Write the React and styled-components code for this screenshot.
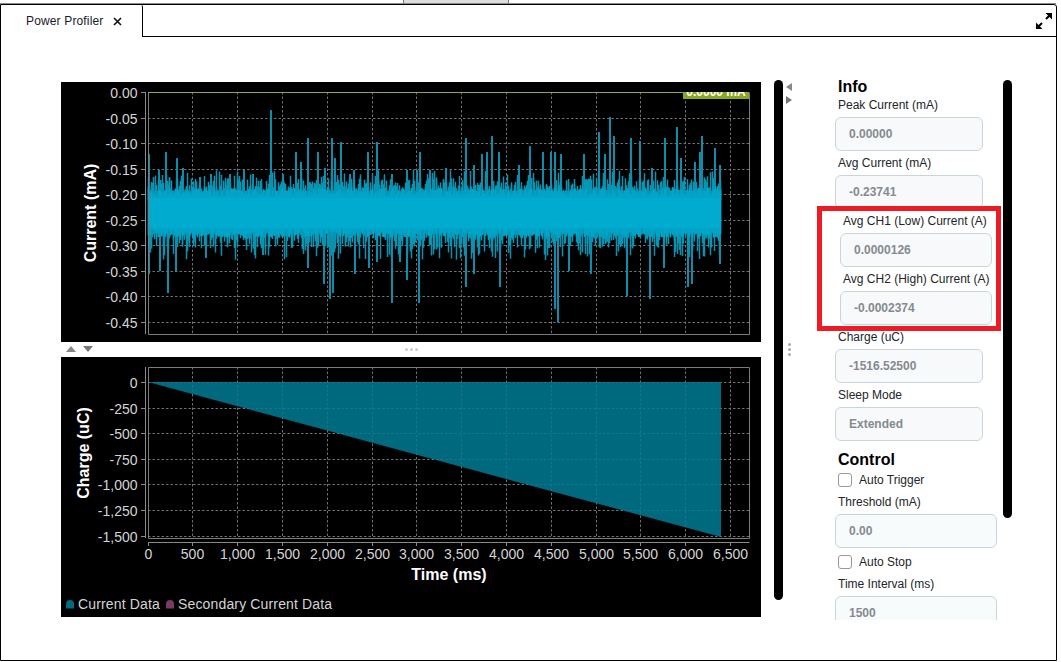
import React from 'react';
import styled, { createGlobalStyle } from 'styled-components';

const GlobalStyle = createGlobalStyle`
  html, body {
    margin: 0;
    background: #fff;
    overflow: hidden;
  }
  body {
    font-family: "Liberation Sans", Arial, sans-serif;
    font-size: 12px;
    color: #212529;
  }
`;

const TopStrip = styled.div`
  width: 1056px;
  height: 4px;
  border-bottom: 1px solid #888;
  padding-left: 403px;
  box-sizing: border-box;
  display: flex;
`;

const DragHandle = styled.div`
  width: 106px;
  box-sizing: border-box;
  background: #ddd;
  border-left: 1px solid #777;
  border-right: 1px solid #777;
`;

const Shell = styled.div`
  width: 1055px;
  height: 655px;
  border: 1px solid #000;
  border-top-right-radius: 3px;
  overflow: hidden;
`;

const TabBar = styled.div`
  display: flex;
  height: 32px;
`;

const Tab = styled.div`
  width: 142px;
  border-right: 1px solid #000;
  border-top-right-radius: 2px;
  display: flex;
  align-items: center;
  padding: 0 0 0 25px;
  box-sizing: border-box;
  gap: 10px;
  color: #1a1a2a;
  letter-spacing: 0.15px;
`;

const TabRest = styled.div`
  flex: 1;
  border-bottom: 1px solid #000;
  display: flex;
  justify-content: flex-end;
  padding: 8px 4px 0 0;
`;

const Workspace = styled.div`
  display: flex;
  align-items: flex-start;
  padding: 41px 0 0 60px;
`;

const ChartColumn = styled.div`
  width: 700px;
  margin-top: 4px;
  flex: none;
`;

const ChartPanel = styled.div`
  height: 260px;
  background: #000;
  svg {
    display: block;
  }
`;

const Splitter = styled.div`
  height: 15px;
  position: relative;
  display: flex;
  align-items: center;
  justify-content: center;
`;

const SplitterArrows = styled.div`
  position: absolute;
  left: 5px;
  top: 4px;
  display: flex;
  gap: 7px;
`;

const ArrowUp = styled.span`
  width: 0;
  height: 0;
  border-left: 5px solid transparent;
  border-right: 5px solid transparent;
  border-bottom: 6px solid #888;
`;

const ArrowDown = styled(ArrowUp)`
  border-bottom: none;
  border-top: 6px solid #777;
`;

const GripDots = styled.div`
  display: flex;
  flex-direction: ${p => (p.$vertical ? 'column' : 'row')};
  gap: 2px;
  margin-top: ${p => (p.$vertical ? '239px' : '0')};
  span {
    width: 3px;
    height: 3px;
    border-radius: 50%;
    background: ${p => (p.$vertical ? '#aaa' : '#ccc')};
  }
`;

const Rail = styled.div`
  width: 9px;
  height: ${p => p.$height}px;
  background: #000;
  border-radius: 5px;
  margin: 2px 0 0 ${p => p.$gap || 0}px;
  flex: none;
`;

const ArrowColumn = styled.div`
  width: 8px;
  margin: 5px 0 0 2px;
  display: flex;
  flex-direction: column;
  align-items: center;
  flex: none;
`;

const ArrowLeft = styled.span`
  width: 0;
  height: 0;
  border-top: 4px solid transparent;
  border-bottom: 4px solid transparent;
  border-right: 6px solid #888;
`;

const ArrowRight = styled.span`
  width: 0;
  height: 0;
  margin-top: 5px;
  border-top: 4px solid transparent;
  border-bottom: 4px solid transparent;
  border-left: 6px solid #777;
`;

const SidePanel = styled.div`
  width: 188px;
  height: 542px;
  margin-left: 22px;
  padding-left: 20px;
  box-sizing: border-box;
  overflow: hidden;
  flex: none;
  display: flex;
  flex-direction: column;
  > * {
    flex: none;
  }
`;

const SectionTitle = styled.h3`
  margin: ${p => (p.$first ? '0' : '6px')} 0 1px 3px;
  font-size: 16px;
  line-height: 18px;
  font-weight: 700;
  color: #000;
`;

const Field = styled.div`
  margin-bottom: 4px;
`;

const FieldLabel = styled.div`
  margin: 0 0 4px 3px;
  line-height: 16px;
  white-space: nowrap;
`;

const FieldValue = styled.div`
  width: ${p => p.$width || 148}px;
  height: 34px;
  box-sizing: border-box;
  padding-left: 13px;
  border: 1px solid #c8d6dc;
  border-radius: 6px;
  background: ${p => (p.$editable ? '#f8fbfc' : '#f8f9fa')};
  color: #868a90;
  font-weight: 700;
  line-height: 32px;
`;

const Highlighted = styled.div`
  position: relative;
  margin-left: 5px;
`;

const RedBox = styled.div`
  position: absolute;
  left: -23px;
  top: -7px;
  width: 184px;
  height: 125px;
  box-sizing: border-box;
  border: 5px solid #ed1c24;
`;

const CheckRow = styled.label`
  display: flex;
  align-items: center;
  gap: 7px;
  height: 14px;
  margin: 3px 0 7px 3px;
`;

const CheckBox = styled.input.attrs({ type: 'checkbox' })`
  appearance: none;
  width: 14px;
  height: 14px;
  margin: 0;
  border: 1px solid #999;
  border-radius: 3px;
  background: #fff;
`;

const TickLabel = styled.text`
  font-family: "Liberation Sans", Arial, sans-serif;
  font-size: 14px;
  fill: #d4d4d4;
`;

const LegendLabel = styled(TickLabel)`
  letter-spacing: 0.15px;
`;

const AxisTitle = styled.text`
  font-family: "Liberation Sans", Arial, sans-serif;
  font-size: 16px;
  font-weight: 700;
  fill: #fff;
`;

const BadgeText = styled.text`
  font-family: "Liberation Sans", Arial, sans-serif;
  font-size: 12px;
  font-weight: 700;
  fill: #fff;
`;

const X_GRID = [192.5, 237.5, 282.5, 327.5, 372.5, 416.5, 461.5, 506.5, 551.5, 596.5, 640.5, 685.5, 730.5];
const CURRENT_TICKS = ['0.00', '-0.05', '-0.10', '-0.15', '-0.20', '-0.25', '-0.30', '-0.35', '-0.40', '-0.45'];
const CHARGE_TICKS = ['0', '-250', '-500', '-750', '-1,000', '-1,250', '-1,500'];
const TIME_TICKS = ['0', '500', '1,000', '1,500', '2,000', '2,500', '3,000', '3,500', '4,000', '4,500', '5,000', '5,500', '6,000', '6,500'];

// spike tops and bottoms read off the trace
const UP_SPIKES = [
  [149, 154], [159, 170], [166, 152], [177, 158], [183, 168], [200, 177], [211, 174], [230, 174], [244, 170], [253, 174],
  [271, 110], [283, 174], [296, 152], [301, 162], [308, 138], [318, 152], [325, 168], [332, 138], [335, 158], [341, 142],
  [350, 174], [354, 170], [368, 152], [377, 142], [392, 174], [407, 170], [417, 170], [420, 152], [430, 170], [446, 168],
  [466, 138], [474, 165], [482, 154], [487, 152], [492, 136], [499, 152], [519, 165], [530, 146], [543, 152], [551, 152],
  [555, 152], [561, 154], [584, 154], [599, 132], [605, 154], [610, 117], [614, 136], [631, 138], [640, 141], [652, 168],
  [665, 138], [677, 127], [681, 158], [695, 162], [700, 152], [702, 136], [715, 148], [720, 165],
];
const DOWN_SPIKES = [
  [149, 274], [160, 271], [168, 293], [176, 271], [206, 258], [263, 255], [308, 268], [324, 284], [330, 299], [333, 293],
  [355, 274], [369, 268], [377, 262], [392, 303], [400, 262], [407, 280], [419, 303], [466, 287], [474, 274], [500, 287],
  [555, 309], [558, 322], [569, 271], [591, 274], [627, 296], [650, 299], [664, 268], [688, 287], [692, 284], [720, 264],
];

function seeded(seed) {
  let s = seed;
  return () => {
    s = (s + 0x6d2b79f5) | 0;
    let t = Math.imul(s ^ (s >>> 15), 1 | s);
    t = (t + Math.imul(t ^ (t >>> 7), 61 | t)) ^ t;
    return ((t ^ (t >>> 14)) >>> 0) / 4294967296;
  };
}

function buildTrace() {
  const rnd = seeded(42);
  let mid = '';
  let outer = '';
  let inner = '';
  for (let x = 148.5; x < 721; x += 1) {
    const a = rnd();
    const b = rnd();
    outer += `M${x} ${(191 - a * a * 13).toFixed(1)}V${(233 + b * b * 15).toFixed(1)}`;
    inner += `M${x} ${(197 - rnd() * 9).toFixed(1)}V${(228 + rnd() * 10).toFixed(1)}`;
    if (rnd() < 0.25) mid += `M${x} ${(186 - rnd() * 16).toFixed(1)}V200`;
    if (rnd() < 0.22) mid += `M${x} 225V${(246 + rnd() * 14).toFixed(1)}`;
  }
  const spikes = [
    ...UP_SPIKES.map(([x, y]) => `M${x} ${y}V200`),
    ...DOWN_SPIKES.map(([x, y]) => `M${x} 225V${y}`),
  ].join('');
  return { mid, outer, inner, spikes };
}

const trace = buildTrace();

const Grid = ({ rows, top, bottom }) => (
  <g stroke="#707070" strokeWidth="1" strokeDasharray="2.5 2" fill="none">
    {rows.map(y => <path key={y} d={`M148 ${y}H749`} />)}
    {X_GRID.map(x => <path key={x} d={`M${x} ${top}V${bottom}`} />)}
  </g>
);

const YAxis = ({ rows, labels, top, bottom }) => (
  <g>
    <path d={`M145.5 ${top}V${bottom}`} stroke="#8a8a8a" fill="none" />
    {rows.map((y, i) => (
      <g key={y}>
        <path d={`M141 ${y}H145`} stroke="#8a8a8a" />
        <TickLabel x="137.5" y={y + 5} textAnchor="end">{labels[i]}</TickLabel>
      </g>
    ))}
  </g>
);

const CurrentChart = () => {
  const rows = CURRENT_TICKS.map((_, i) => Math.round(92 + i * 25.5) + 0.5);
  return (
    <svg width="700" height="260" viewBox="61 82 700 260">
      <defs>
        <clipPath id="badge-clip"><rect x="683" y="92" width="66" height="7" /></clipPath>
      </defs>
      <Grid rows={rows} top={92} bottom={334} />
      <path d={trace.spikes} stroke="#0b8dab" strokeWidth="2" fill="none" />
      <path d={trace.mid} stroke="#0b90ae" strokeWidth="1.5" fill="none" />
      <path d={trace.outer} stroke="#0696b6" strokeWidth="1.5" fill="none" />
      <path d={trace.inner} stroke="#02a5c8" strokeWidth="1.5" fill="none" />
      <rect x="148" y="198" width="573" height="30" fill="#00abd0" />
      <path d="M148.5 92.5V334.5H749.5V92.5" stroke="#7c7c7c" fill="none" />
      <path d="M148 92.5H749" stroke="#8ea84c" fill="none" />
      <YAxis rows={rows} labels={CURRENT_TICKS} top={92} bottom={334} />
      <AxisTitle x="0" y="0" textAnchor="middle" transform="translate(96 213) rotate(-90)">Current (mA)</AxisTitle>
      <rect x="683" y="92" width="66" height="7" fill="#8aa81e" />
      <g clipPath="url(#badge-clip)">
        <BadgeText x="716" y="96" textAnchor="middle">0.0000 mA</BadgeText>
      </g>
    </svg>
  );
};

const ChargeChart = () => {
  const rows = CHARGE_TICKS.map((_, i) => Math.round(382 + i * 25.6) + 0.5);
  return (
    <svg width="700" height="260" viewBox="61 357 700 260">
      <Grid rows={rows} top={367} bottom={538} />
      <path d="M148 382L721 382V537Z" fill="#007a92" fillOpacity="0.86" />
      <path d="M148.5 367.5V538.5H749.5V367.5Z" stroke="#7c7c7c" fill="none" />
      <YAxis rows={rows} labels={CHARGE_TICKS} top={367} bottom={538} />
      <path d="M148 542.5H749.5" stroke="#8a8a8a" fill="none" />
      {TIME_TICKS.map((label, i) => {
        const x = i === 0 ? 148.5 : X_GRID[i - 1];
        return (
          <g key={label}>
            <path d={`M${x} 542V546`} stroke="#8a8a8a" />
            <TickLabel x={x} y="559" textAnchor="middle">{label}</TickLabel>
          </g>
        );
      })}
      <AxisTitle x="0" y="0" textAnchor="middle" transform="translate(89 453) rotate(-90)">Charge (uC)</AxisTitle>
      <AxisTitle x="449" y="580" textAnchor="middle">Time (ms)</AxisTitle>
      <path d="M66 608.5V604Q66 600 70 600Q74 600 74 604V608.5Z" fill="#006a7e" />
      <LegendLabel x="78" y="609">Current Data</LegendLabel>
      <path d="M166 608.5V604Q166 600 170 600Q174 600 174 604V608.5Z" fill="#7a3a63" />
      <LegendLabel x="178" y="609">Secondary Current Data</LegendLabel>
    </svg>
  );
};

const Dots = ({ vertical }) => (
  <GripDots $vertical={vertical}><span /><span /><span /></GripDots>
);

const ReadOut = ({ label, value, width, editable }) => (
  <Field>
    <FieldLabel>{label}</FieldLabel>
    <FieldValue $width={width} $editable={editable}>{value}</FieldValue>
  </Field>
);

const CheckOption = ({ label }) => (
  <CheckRow>
    <CheckBox />
    {label}
  </CheckRow>
);

export default function App() {
  return (
    <>
      <GlobalStyle />
      <TopStrip><DragHandle /></TopStrip>
      <Shell>
        <TabBar>
          <Tab>
            Power Profiler
            <svg width="9" height="9" viewBox="0 0 9 9">
              <path d="M1 1L8 8M8 1L1 8" stroke="#111" strokeWidth="1.6" />
            </svg>
          </Tab>
          <TabRest>
            <svg width="16" height="16" viewBox="0 0 16 16">
              <path d="M9.5 0H16V6.5ZM0 16V9.5L6.5 16Z" fill="#000" />
              <path d="M2.5 13.5L6 10M10 6L13.5 2.5" stroke="#000" strokeWidth="2" />
            </svg>
          </TabRest>
        </TabBar>
        <Workspace>
          <ChartColumn>
            <ChartPanel><CurrentChart /></ChartPanel>
            <Splitter>
              <SplitterArrows><ArrowUp /><ArrowDown /></SplitterArrows>
              <Dots />
            </Splitter>
            <ChartPanel><ChargeChart /></ChartPanel>
          </ChartColumn>
          <Rail $height={520} $gap={13} />
          <ArrowColumn>
            <ArrowLeft />
            <ArrowRight />
            <Dots vertical />
          </ArrowColumn>
          <SidePanel>
            <SectionTitle $first>Info</SectionTitle>
            <ReadOut label="Peak Current (mA)" value="0.00000" />
            <ReadOut label="Avg Current (mA)" value="-0.23741" />
            <Highlighted>
              <ReadOut label="Avg CH1 (Low) Current (A)" value="0.0000126" width={152} />
              <ReadOut label="Avg CH2 (High) Current (A)" value="-0.0002374" width={152} />
              <RedBox />
            </Highlighted>
            <ReadOut label="Charge (uC)" value="-1516.52500" />
            <ReadOut label="Sleep Mode" value="Extended" />
            <SectionTitle>Control</SectionTitle>
            <CheckOption label="Auto Trigger" />
            <ReadOut label="Threshold (mA)" value="0.00" width={162} editable />
            <CheckOption label="Auto Stop" />
            <ReadOut label="Time Interval (ms)" value="1500" width={162} editable />
          </SidePanel>
          <Rail $height={438} />
        </Workspace>
      </Shell>
    </>
  );
}
